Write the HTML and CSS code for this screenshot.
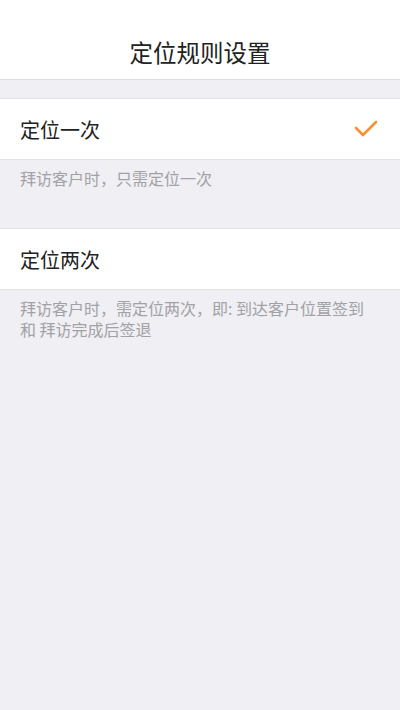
FILE: index.html
```html
<!DOCTYPE html>
<html lang="zh-CN">
<head>
    <meta charset="UTF-8">
    <meta name="viewport" content="width=device-width, initial-scale=1.0">
    <title>定位规则设置</title>
    <link rel="stylesheet" href="styles.css">
</head>
<body>
    <div class="header">
        <h1>定位规则设置</h1>
    </div>
    <div class="list">
        <div class="group">
            <div class="option selected">
                <span class="option-label">定位一次</span>
                <svg class="check" width="26" height="20" viewBox="0 0 26 20">
                    <polyline points="3,9 10,16 23,3" fill="none" stroke="#f7902d" stroke-width="2.6" stroke-linecap="round" stroke-linejoin="round"/>
                </svg>
            </div>
            <p class="note">拜访客户时，只需定位一次</p>
        </div>
        <div class="group">
            <div class="option">
                <span class="option-label">定位两次</span>
            </div>
            <p class="note">拜访客户时，需定位两次，即: 到达客户位置签到和 拜访完成后签退</p>
        </div>
    </div>
</body>
</html>
```

FILE: styles.css
```css
body {
    margin: 0;
    min-height: 710px;
    background-color: #efeff4;
    font-family: "Noto Sans CJK SC", "Noto Sans", sans-serif;
    color: #222;
}
.header {
    background-color: #fff;
    height: 79px;
    border-bottom: 1px solid #dedede;
}
.header h1 {
    margin: 0;
    padding-top: 26px;
    line-height: 53px;
    font-size: 23.5px;
    font-weight: normal;
    text-align: center;
    color: #222;
}
.list {
    padding-top: 18px;
}
.option {
    display: flex;
    align-items: center;
    justify-content: space-between;
    height: 60px;
    padding: 0 21px 0 20px;
    background-color: #fff;
    border-top: 1px solid #e3e3e6;
    border-bottom: 1px solid #e3e3e6;
}
.option-label {
    font-size: 20px;
}
.check {
    display: block;
}
.note {
    margin: 0;
    padding: 8px 20px 39px;
    font-size: 16px;
    line-height: 21px;
    color: #a2a2a6;
}
```
